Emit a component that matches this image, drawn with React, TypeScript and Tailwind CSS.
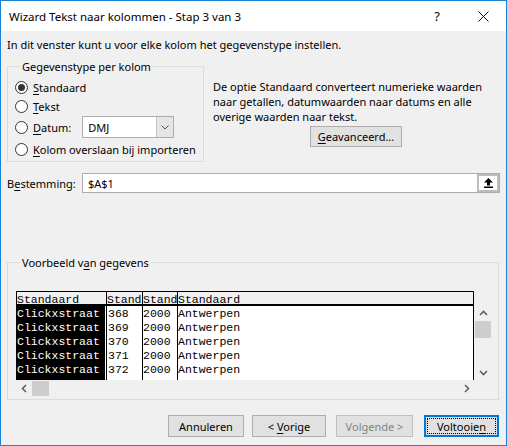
import React from 'react';

// Windows 10 style "Text to columns" wizard, step 3

const ROWS = ['368', '369', '370', '371', '372'];

function Radio({ checked, children }: { checked?: boolean; children: React.ReactNode }) {
  return (
    <div className="flex items-center">
      <span className="w-[13px] h-[13px] rounded-full border border-[#333333] bg-white flex items-center justify-center shrink-0">
        {checked && <span className="w-[7px] h-[7px] rounded-full bg-[#333333]" />}
      </span>
      <span className="ml-[5px] whitespace-nowrap">{children}</span>
    </div>
  );
}

function Chevron({ dir }: { dir: 'up' | 'down' | 'left' | 'right' }) {
  const d = {
    up: 'M1 6 L4.5 2.5 L8 6',
    down: 'M1 3 L4.5 6.5 L8 3',
    left: 'M6 1 L2.5 4.5 L6 8',
    right: 'M3 1 L6.5 4.5 L3 8',
  }[dir];
  return (
    <svg width="9" height="9" viewBox="0 0 9 9">
      <path d={d} fill="none" stroke="#606060" strokeWidth="1.6" />
    </svg>
  );
}

function Btn({ children, w, disabled }: { children: React.ReactNode; w: string; disabled?: boolean }) {
  return (
    <div
      className={`${w} h-[22px] flex items-center justify-center border ${
        disabled ? 'border-[#bfbfbf] bg-[#e1e1e1] text-[#838383]' : 'border-[#adadad] bg-[#e1e1e1] text-black'
      }`}
    >
      {children}
    </div>
  );
}

const U = ({ children }: { children: React.ReactNode }) => (
  <span className="underline decoration-1 underline-offset-[2px]">{children}</span>
);

export default function App() {
  return (
    <div className="w-[507px] h-[446px] border border-[#1883d7] bg-[#f0f0f0] flex flex-col text-[11px] leading-[15px] text-black font-['Noto_Sans',sans-serif]">
      {/* title bar */}
      <div className="h-[30px] bg-white flex items-center pl-[8px] shrink-0 text-[11.5px]">
        <span className="flex-1 whitespace-nowrap">Wizard Tekst naar kolommen - Stap 3 van 3</span>
        <span className="w-[46px] text-center text-[13px]">?</span>
        <span className="w-[46px] flex justify-center">
          <svg width="11" height="11" viewBox="0 0 11 11">
            <path d="M0.5 0.5 L10.5 10.5 M10.5 0.5 L0.5 10.5" stroke="#111" strokeWidth="1" />
          </svg>
        </span>
      </div>

      <div className="px-[6px] flex flex-col">
        <p className="mt-[6px] whitespace-nowrap">
          In dit venster kunt u voor elke kolom het gegevenstype instellen.
        </p>

        <div className="flex mt-[7px]">
          <fieldset className="w-[197px] min-w-0 shrink-0 border border-[#dcdcdc] pl-[7px] pt-[4px] pb-[1px]">
            <legend className="ml-[5px] px-[2px]">Gegevenstype per kolom</legend>
            <div className="h-[19px] flex items-center">
              <Radio checked>
                <U>S</U>tandaard
              </Radio>
            </div>
            <div className="h-[19px] flex items-center">
              <Radio>
                <U>T</U>ekst
              </Radio>
            </div>
            <div className="h-[22px] flex items-center">
              <Radio>
                <U>D</U>atum:
              </Radio>
              <div className="ml-[11px] w-[92px] h-[22px] border border-[#adadad] bg-white flex items-center">
                <span className="flex-1 pl-[5px]">DMJ</span>
                <span className="w-[17px] h-full bg-[#e5e5e5] border-l border-[#c4c4c4] flex items-center justify-center">
                  <svg width="8" height="5" viewBox="0 0 8 5">
                    <path d="M0.5 0.5 L4 4 L7.5 0.5" fill="none" stroke="#555" strokeWidth="1" />
                  </svg>
                </span>
              </div>
            </div>
            <div className="h-[22px] flex items-center">
              <Radio>
                <U>K</U>olom overslaan bij importeren
              </Radio>
            </div>
          </fieldset>

          <div className="flex-1 pl-[9px] pt-[20px]">
            <p className="whitespace-nowrap">
              De optie Standaard converteert numerieke waarden
              <br />
              naar getallen, datumwaarden naar datums en alle
              <br />
              overige waarden naar tekst.
            </p>
            <div className="ml-[97px] mt-[2px] w-[92px] h-[21px] border border-[#adadad] bg-[#e1e1e1] flex items-center justify-center">
              <span>
                <U>G</U>eavanceerd...
              </span>
            </div>
          </div>
        </div>

        {/* destination */}
        <div className="flex items-center h-[20px] mt-[11px]">
          <span className="w-[75px]">
            B<U>e</U>stemming:
          </span>
          <div className="flex-1 h-[20px] border border-[#acacac] bg-white flex items-center">
            <span className="flex-1 pl-[5px]">$A$1</span>
            <div className="w-[22px] h-full bg-[#bcbcbc] p-[2px]">
              <div className="w-full h-full bg-white flex items-center justify-center">
                <svg width="11" height="12" viewBox="0 0 11 12">
                  <polygon points="5.5,1 10,5.5 7,5.5 7,8.5 4,8.5 4,5.5 1,5.5" fill="#000" />
                  <rect x="1" y="9.5" width="9" height="1.5" fill="#000" />
                </svg>
              </div>
            </div>
          </div>
        </div>

        {/* preview */}
        <fieldset className="mt-[62px] w-[492px] min-w-0 border border-[#dcdcdc] pl-[8px] pt-[21px] pb-[3px]">
          <legend className="ml-[4px] px-[2px]">
            Voorbeeld v<U>a</U>n gegevens
          </legend>
          <div className="flex flex-col w-[475px] font-['Liberation_Mono',monospace] text-[11.5px]">
            <div className="flex">
              <div className="flex w-[458px]">
                {/* col 1 */}
                <div className="w-[91px] flex flex-col border-l border-r border-black">
                  <div className="h-[15px] border-t border-b-2 border-black overflow-hidden leading-[12px] pt-[2px]">
                    Standaard
                  </div>
                  <div className="h-[74px] bg-white">
                    <div className="h-full mr-[1px] bg-black text-white pt-[1px]">
                      {ROWS.map((r) => (
                        <div key={r} className="h-[14px] leading-[14px]">
                          Clickxstraat
                        </div>
                      ))}
                    </div>
                  </div>
                </div>
                {/* col 2 */}
                <div className="w-[36px] flex flex-col border-r border-black">
                  <div className="h-[15px] border-t border-b-2 border-black overflow-hidden leading-[12px] pt-[2px]">
                    Stand
                  </div>
                  <div className="h-[74px] bg-white pt-[1px] pl-[1px]">
                    {ROWS.map((r) => (
                      <div key={r} className="h-[14px] leading-[14px]">
                        {r}
                      </div>
                    ))}
                  </div>
                </div>
                {/* col 3 */}
                <div className="w-[35px] flex flex-col border-r border-black">
                  <div className="h-[15px] border-t border-b-2 border-black overflow-hidden leading-[12px] pt-[2px]">
                    Stand
                  </div>
                  <div className="h-[74px] bg-white pt-[1px]">
                    {ROWS.map((r) => (
                      <div key={r} className="h-[14px] leading-[14px]">
                        2000
                      </div>
                    ))}
                  </div>
                </div>
                {/* col 4 */}
                <div className="w-[296px] flex flex-col border-r border-black">
                  <div className="h-[15px] border-t border-b-2 border-black overflow-hidden leading-[12px] pt-[2px]">
                    Standaard
                  </div>
                  <div className="h-[74px] bg-white pt-[1px]">
                    {ROWS.map((r) => (
                      <div key={r} className="h-[14px] leading-[14px]">
                        Antwerpen
                      </div>
                    ))}
                  </div>
                </div>
              </div>
              {/* vertical scrollbar */}
              <div className="w-[17px] flex flex-col">
                <div className="h-[15px]" />
                <div className="h-[74px] flex flex-col pl-[1px]">
                  <div className="h-[15px] flex items-center justify-center">
                    <Chevron dir="up" />
                  </div>
                  <div className="h-[17px] bg-[#cdcdcd]" />
                  <div className="flex-1" />
                  <div className="h-[15px] flex items-center justify-center">
                    <Chevron dir="down" />
                  </div>
                </div>
              </div>
            </div>
            {/* horizontal scrollbar */}
            <div className="h-[16px] w-[458px] flex items-center">
              <div className="w-[16px] flex justify-center">
                <Chevron dir="left" />
              </div>
              <div className="w-[17px] h-[15px] bg-[#cdcdcd]" />
              <div className="flex-1" />
              <div className="w-[16px] flex justify-center">
                <Chevron dir="right" />
              </div>
            </div>
          </div>
        </fieldset>

        {/* buttons */}
        <div className="mt-[15px] mr-[1px] flex justify-end">
          <Btn w="w-[76px]">Annuleren</Btn>
          <div className="w-[8px]" />
          <Btn w="w-[74px]">
            <span>
              &lt; <U>V</U>orige
            </span>
          </Btn>
          <div className="w-[10px]" />
          <Btn w="w-[77px]" disabled>
            Volgende &gt;
          </Btn>
          <div className="w-[11px]" />
          <div className="w-[75px] h-[22px] border-2 border-[#0078d7] bg-[#e1e1e1] p-[1px]">
            <div className="w-full h-full border border-dotted border-black flex items-center justify-center">
              <span>
                Voltooie<U>n</U>
              </span>
            </div>
          </div>
        </div>
      </div>
    </div>
  );
}
